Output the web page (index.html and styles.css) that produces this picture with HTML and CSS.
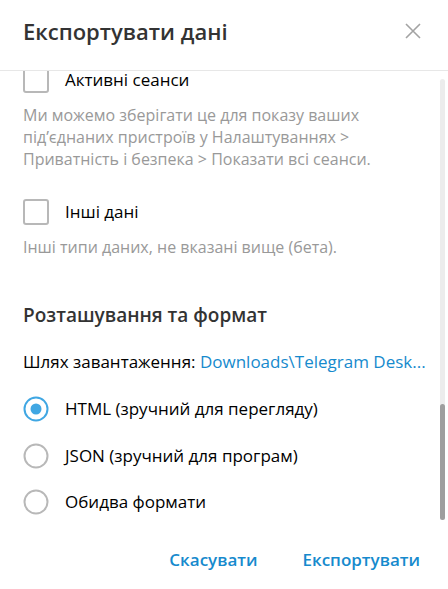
FILE: index.html
```html
<!DOCTYPE html>
<html lang="uk">
<head>
    <meta charset="UTF-8">
    <meta name="viewport" content="width=device-width, initial-scale=1.0">
    <title>Експортувати дані</title>
    <link rel="stylesheet" href="styles.css">
</head>
<body>
    <div class="box">
        <div class="box-title">
            <h1>Експортувати дані</h1>
            <button class="close" aria-label="Закрити">
                <svg width="16" height="16" viewBox="0 0 16 16">
                    <path d="M1 1L15 15M15 1L1 15" stroke="#a3a3a3" stroke-width="1.6" fill="none"/>
                </svg>
            </button>
        </div>

        <div class="box-body">
            <div class="scroll-inner">
                <label class="check-row">
                    <span class="checkbox"></span>
                    <span>Активні сеанси</span>
                </label>
                <p class="about">Ми можемо зберігати це для показу ваших під’єднаних пристроїв у Налаштуваннях &gt; Приватність і безпека &gt; Показати всі сеанси.</p>

                <label class="check-row second">
                    <span class="checkbox"></span>
                    <span>Інші дані</span>
                </label>
                <p class="about">Інші типи даних, не вказані вище (бета).</p>

                <h2 class="section">Розташування та формат</h2>
                <div class="path">Шлях завантаження: <a href="#">Downloads\Telegram Desk...</a></div>

                <div class="radios">
                    <label class="radio-row">
                        <svg class="radio" width="26" height="26" viewBox="0 0 26 26">
                            <circle cx="13" cy="13" r="11.5" stroke="#40a7e3" stroke-width="2" fill="none"/>
                            <circle cx="13" cy="13" r="5.5" fill="#40a7e3"/>
                        </svg>
                        <span>HTML (зручний для перегляду)</span>
                    </label>
                    <label class="radio-row">
                        <svg class="radio" width="26" height="26" viewBox="0 0 26 26">
                            <circle cx="13" cy="13" r="11.5" stroke="#b8b8b8" stroke-width="2" fill="none"/>
                        </svg>
                        <span>JSON (зручний для програм)</span>
                    </label>
                    <label class="radio-row">
                        <svg class="radio" width="26" height="26" viewBox="0 0 26 26">
                            <circle cx="13" cy="13" r="11.5" stroke="#b8b8b8" stroke-width="2" fill="none"/>
                        </svg>
                        <span>Обидва формати</span>
                    </label>
                </div>
            </div>
            <div class="scrollbar"><div class="thumb"></div></div>
        </div>

        <div class="buttons">
            <button class="link-btn">Скасувати</button>
            <button class="link-btn">Експортувати</button>
        </div>
    </div>
</body>
</html>
```

FILE: styles.css
```css
body {
    margin: 0;
    background-color: white;
    font-family: "Open Sans", "Noto Sans", sans-serif;
    font-size: 17px;
    color: #000;
}
.box {
    width: 448px;
    height: 589px;
    display: flex;
    flex-direction: column;
}
.box-title {
    height: 71px;
    box-sizing: border-box;
    border-bottom: 1px solid #e7e7e7;
    display: flex;
    align-items: center;
    justify-content: space-between;
    padding: 0 27px 8px 23px;
}
.box-title h1 {
    margin: 0;
    font-size: 22px;
    font-weight: 600;
    color: #333;
}
.close {
    border: none;
    background: none;
    padding: 0;
    width: 16px;
    height: 16px;
    cursor: pointer;
}
.box-body {
    position: relative;
    height: 459px;
    overflow: hidden;
}
.scroll-inner {
    margin-top: -4px;
    padding: 0 12px 0 23px;
}
.check-row, .radio-row {
    display: flex;
    align-items: center;
    gap: 16px;
    line-height: 26px;
}
.checkbox {
    width: 26px;
    height: 26px;
    box-sizing: border-box;
    border: 2px solid #b8b8b8;
    border-radius: 3px;
}
.check-row.second {
    margin-top: 29px;
}
.about {
    margin: 11px 11px 0 0;
    font-size: 16px;
    color: #999;
    line-height: 22px;
}
.section {
    margin: 45px 0 0;
    font-size: 19px;
    font-weight: 600;
    color: #333;
    line-height: 24px;
}
.path {
    margin-top: 24px;
    line-height: 22px;
    white-space: nowrap;
}
.path a {
    color: #168acd;
    text-decoration: none;
}
.radios {
    margin-top: 23px;
    display: flex;
    flex-direction: column;
    gap: 20.5px;
}
.radio {
    flex-shrink: 0;
}
.scrollbar {
    position: absolute;
    right: 3px;
    top: 8px;
    width: 5px;
    height: 441px;
    border-radius: 3px;
    background-color: #ececec;
}
.thumb {
    margin-top: 325px;
    height: 116px;
    border-radius: 3px;
    background-color: #9e9e9e;
}
.buttons {
    flex: 1;
    display: flex;
    justify-content: flex-end;
    align-items: center;
    gap: 17px;
    padding-right: 14px;
}
.link-btn {
    border: none;
    background: none;
    font-family: "Open Sans", "Noto Sans", sans-serif;
    font-size: 17px;
    font-weight: 600;
    color: #168acd;
    padding: 8px 14px;
    cursor: pointer;
}
```
